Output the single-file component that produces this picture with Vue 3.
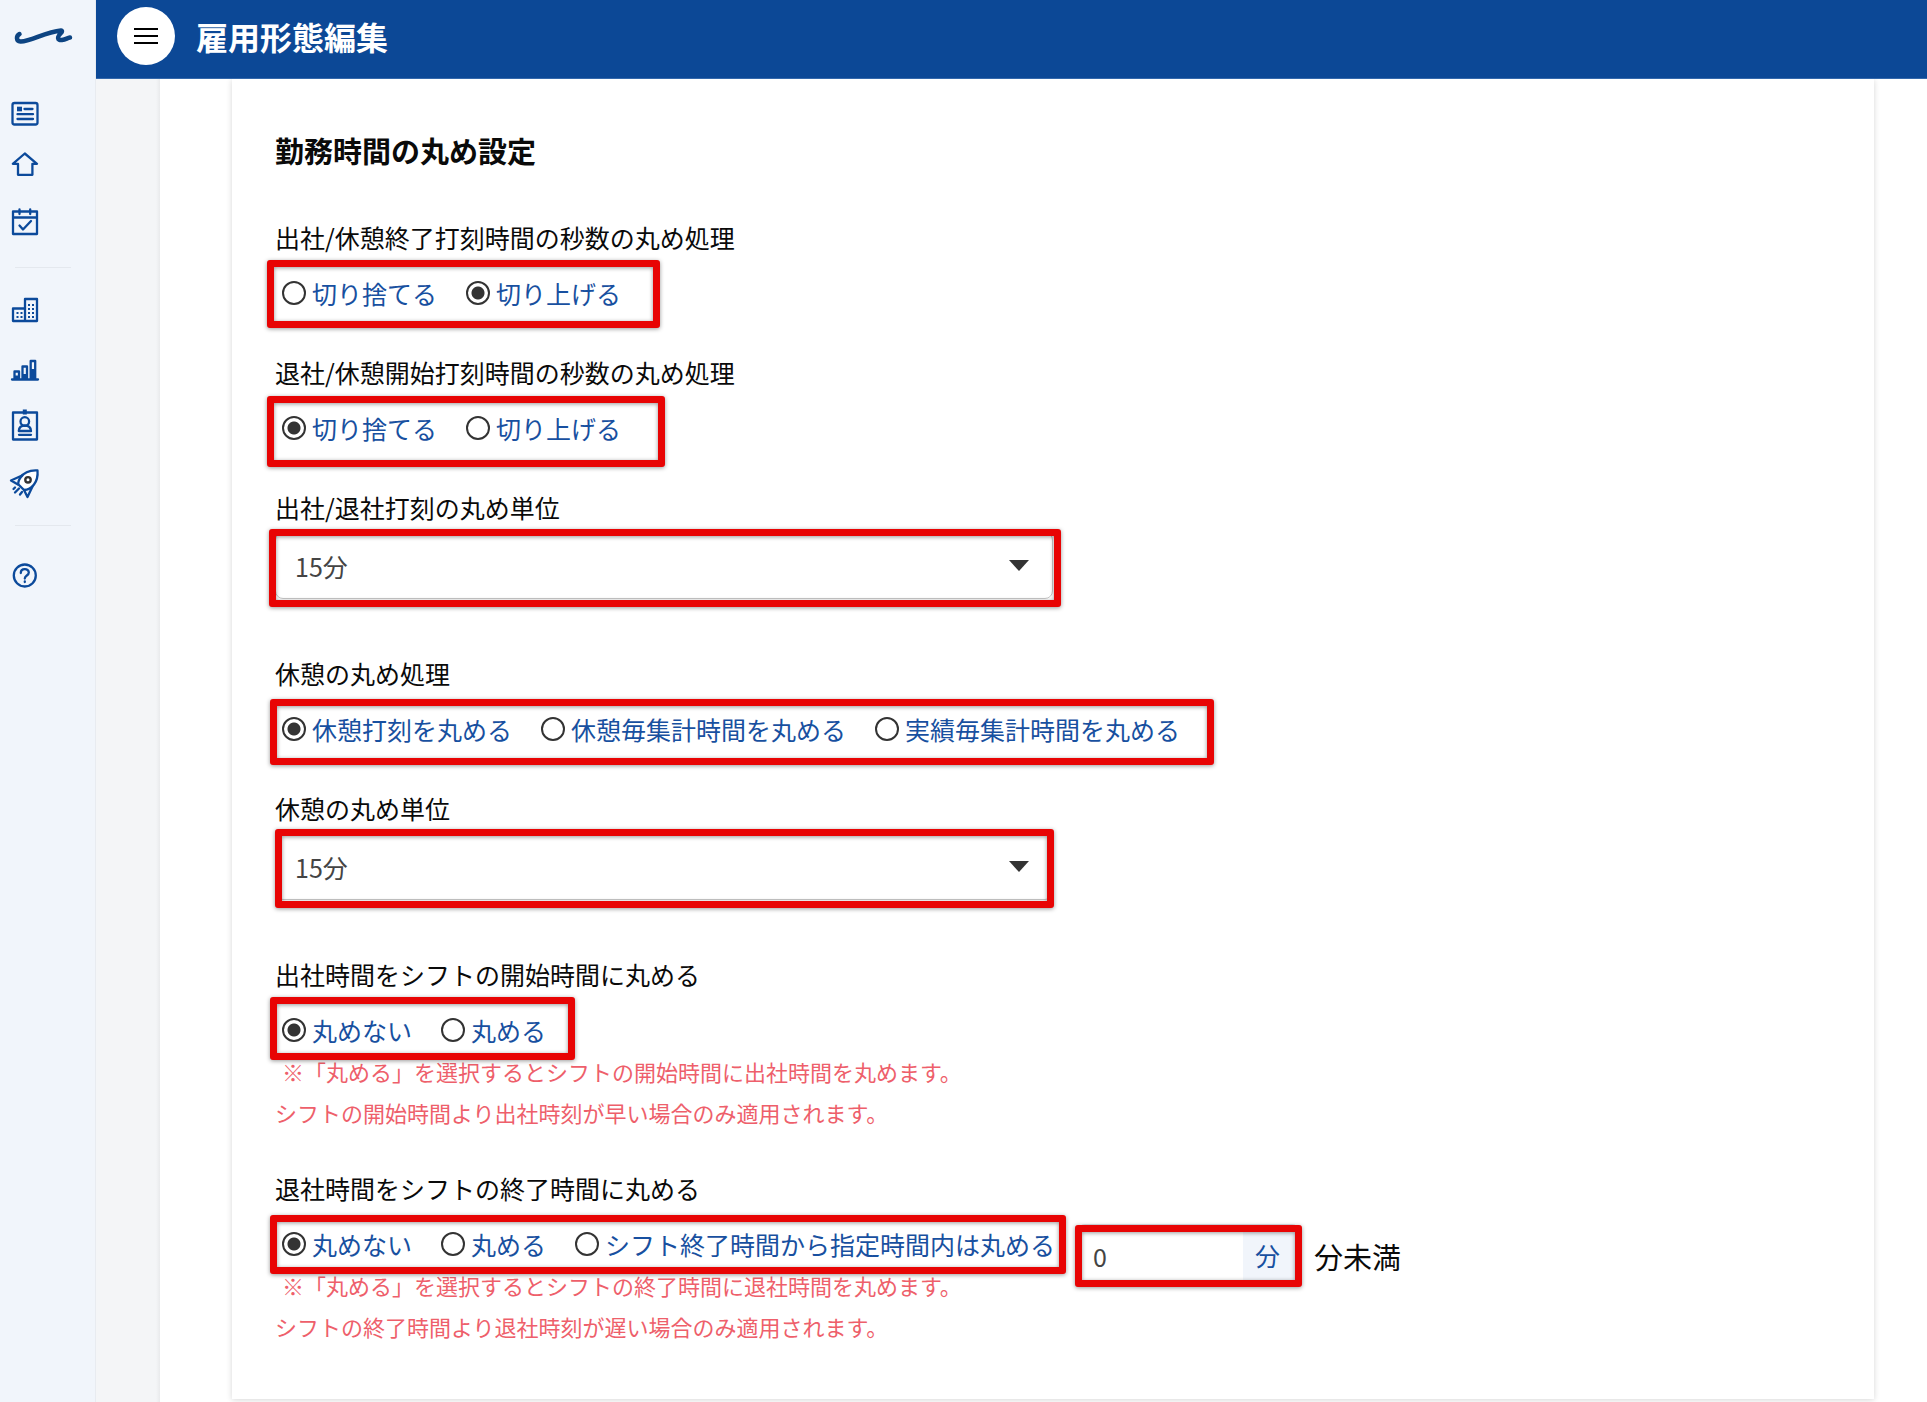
<script setup>
import { reactive } from 'vue'

const units = ['1分', '5分', '10分', '15分', '30分']

// `mark` is the highlight rectangle drawn over the control: offset and size in px
const fields = reactive([
  {
    id: 'in-seconds', kind: 'radio', label: '出社/休憩終了打刻時間の秒数の丸め処理',
    options: ['切り捨てる', '切り上げる'], value: '切り上げる',
    mark: { left: -8, top: -15, width: 393, height: 68 }
  },
  {
    id: 'out-seconds', kind: 'radio', label: '退社/休憩開始打刻時間の秒数の丸め処理',
    options: ['切り捨てる', '切り上げる'], value: '切り捨てる',
    mark: { left: -8, top: -14, width: 398, height: 71 }
  },
  {
    id: 'punch-unit', kind: 'select', label: '出社/退社打刻の丸め単位', value: '15分',
    mark: { left: -6, top: -3, width: 792, height: 78 }
  },
  {
    id: 'break-mode', kind: 'radio', label: '休憩の丸め処理',
    options: ['休憩打刻を丸める', '休憩毎集計時間を丸める', '実績毎集計時間を丸める'], value: '休憩打刻を丸める',
    mark: { left: -5, top: -12, width: 944, height: 66 }
  },
  {
    id: 'break-unit', kind: 'select', label: '休憩の丸め単位', value: '15分',
    mark: { left: 0, top: -4, width: 779, height: 79 }
  },
  {
    id: 'shift-start', kind: 'radio', label: '出社時間をシフトの開始時間に丸める',
    options: ['丸めない', '丸める'], value: '丸めない',
    mark: { left: -5, top: -15, width: 305, height: 63 },
    notes: ['※「丸める」を選択するとシフトの開始時間に出社時間を丸めます。', 'シフトの開始時間より出社時刻が早い場合のみ適用されます。']
  },
  {
    id: 'shift-end', kind: 'radio', label: '退社時間をシフトの終了時間に丸める',
    options: ['丸めない', '丸める', 'シフト終了時間から指定時間内は丸める'], value: '丸めない',
    mark: { left: -5, top: -11, width: 796, height: 59 },
    notes: ['※「丸める」を選択するとシフトの終了時間に退社時間を丸めます。', 'シフトの終了時間より退社時刻が遅い場合のみ適用されます。'],
    limit: { value: '0', mark: { left: -3, top: 0, width: 227, height: 62 } }
  }
])

const box = (m) => ({ left: m.left + 'px', top: m.top + 'px', width: m.width + 'px', height: m.height + 'px' })
</script>

<template>
  <div class="shell">
    <aside class="sidebar">
      <a class="logo" href="#" aria-label="トップ">
        <svg width="60" height="20" viewBox="0 0 60 20" fill="none" stroke="#0d4482" stroke-width="4.500" stroke-linecap="round" stroke-linejoin="round">
          <path d="M6.500 8C3 10 3 15 7.500 15.500C17 16 32 6 48 4.500C49.500 4.500 49 6 48 7C44 11 44 14.500 49 14C53 13.500 54 12 57 11.500" />
        </svg>
      </a>
      <nav>
        <ul>
          <li><a href="#" aria-label="お知らせ"><svg viewBox="0 0 40 40">
            <rect x="7.500" y="12" width="25" height="21.500" rx="2" />
            <path d="M19.500 18h8M12.500 23.200h15.500M12.500 28h15.500" />
            <rect class="solid" x="12" y="15.700" width="5" height="4.600" />
          </svg></a></li>
          <li><a href="#" aria-label="ホーム"><svg viewBox="0 0 40 40">
            <path d="M19.800 6.500L32 16.800H27.400V27.800H13V16.800H7.800Z" />
          </svg></a></li>
          <li><a href="#" aria-label="勤怠"><svg viewBox="0 0 40 40">
            <path d="M8 8.500H32V31H8ZM8 14.500H32M14.500 6.500v4.500M25.200 6.500v4.500M14.500 22.500l3.500 4 8-8.500" />
          </svg></a></li>
        </ul>
        <hr />
        <ul>
          <li><a href="#" aria-label="会社"><svg viewBox="0 0 40 40">
            <path d="M20 6H32V28H8V15.500H20ZM20 15V28" />
            <path class="dots" d="M12.500 19v6M16.500 19v6M24 11v14M28 11v14" />
          </svg></a></li>
          <li><a href="#" aria-label="集計"><svg viewBox="0 0 40 40">
            <path d="M7 30.500H33M9.500 30V22.500H14V30M17.500 30V17.500H22V30M25.700 30V12H30.200V30" />
            <path class="solid" d="M9 26.500h6v4H9ZM17 25h6v5.500h-6ZM25 20h6v10.500h-6Z" />
          </svg></a></li>
          <li><a href="#" aria-label="従業員"><svg viewBox="0 0 40 40">
            <path d="M8 7.500H32V34.500H8ZM14 29.800H26M13.800 26C14 22.500 16 20.500 19.800 20.500S25.800 22.500 26 26Z" />
            <circle cx="19.800" cy="16.500" r="4.300" />
            <rect class="solid" x="17.800" y="4.500" width="4" height="5" />
          </svg></a></li>
          <li><a href="#" aria-label="申請"><svg viewBox="0 0 40 40">
            <path fill="#fff" d="M32.500 9.500C25 9 19 11.500 15.500 16.500C13.500 19.500 13 22 13.500 23.500L19 29C22 29 26 27.500 29 23.500C32 19.500 33 15 32.500 9.500Z" />
            <path d="M17 14.500L6 19.500L13 23.500M19 29L22.500 36L27.500 25.500M10 26.500l-1.500 1.500M14 27.500l-4 4M17 31l-2 2.500" />
            <circle cx="23" cy="18.800" r="2.700" stroke="#333" stroke-width="2.400" />
          </svg></a></li>
        </ul>
        <hr />
        <ul>
          <li><a href="#" aria-label="ヘルプ"><svg viewBox="0 0 40 40">
            <circle cx="19.800" cy="24.500" r="11" />
            <path d="M15.800 22C15.800 17 23.800 17 23.800 21.500C23.800 24.500 19.800 24.500 19.800 27.500M19.800 30.500v.5" />
          </svg></a></li>
        </ul>
      </nav>
    </aside>

    <div class="page">
      <header>
        <button type="button" class="menu" aria-label="メニュー"><span></span><span></span><span></span></button>
        <h1>雇用形態編集</h1>
      </header>

      <main>
        <form class="card" @submit.prevent>
          <h2>勤務時間の丸め設定</h2>

          <section v-for="f in fields" :key="f.id" class="field">
            <template v-if="f.kind === 'select'">
              <label class="caption" :for="f.id">{{ f.label }}</label>
              <div class="select">
                <select :id="f.id" v-model="f.value">
                  <option v-for="u in units" :key="u">{{ u }}</option>
                </select>
                <span class="mark" :style="box(f.mark)"></span>
              </div>
            </template>

            <template v-else>
              <p class="caption" :id="f.id">{{ f.label }}</p>
              <div class="body">
                <div class="choice">
                  <div class="radios" role="radiogroup" :aria-labelledby="f.id">
                    <label v-for="o in f.options" :key="o">
                      <input v-model="f.value" type="radio" :name="f.id" :value="o" />{{ o }}
                    </label>
                    <span class="mark" :style="box(f.mark)"></span>
                  </div>
                  <div v-if="f.notes" class="notes">
                    <p v-for="n in f.notes" :key="n">{{ n }}</p>
                  </div>
                </div>
                <div v-if="f.limit" class="limit">
                  <div class="amount">
                    <input id="limit" v-model="f.limit.value" type="text" />
                    <label for="limit">分</label>
                    <span class="mark" :style="box(f.limit.mark)"></span>
                  </div>
                  <span class="suffix">分未満</span>
                </div>
              </div>
            </template>
          </section>
        </form>
      </main>
    </div>
  </div>
</template>

<style>
body {
  background: #fff;
}
</style>

<style scoped>
* {
  box-sizing: border-box;
}

.shell {
  display: flex;
  min-height: 100vh;
  font-family: "Noto Sans CJK JP", sans-serif;
  font-size: 25px;
  line-height: 36px;
  color: #0a0a0a;
}

h1, h2, p, ul {
  margin: 0;
  padding: 0;
}

.sidebar {
  flex: 0 0 96px;
  background: #f1f5fb;
  border-right: 1px solid #e8ebf0;
}

.logo {
  display: block;
  height: 91px;
  padding: 26px 0 0 13px;
}

.logo svg {
  display: block;
}

ul {
  display: flex;
  flex-direction: column;
  gap: 16px;
  padding-left: 5px;
  list-style: none;
}

li a, li svg {
  display: block;
  width: 40px;
  height: 40px;
}

li svg {
  fill: none;
  stroke: #0c4a9b;
  stroke-width: 2.3;
  stroke-linecap: round;
  stroke-linejoin: round;
}

li svg .solid {
  fill: #0c4a9b;
  stroke: none;
}

li svg .dots {
  stroke-width: 2;
  stroke-linecap: butt;
  stroke-dasharray: 2 2;
}

hr {
  height: 1px;
  margin: 24px 24px 25px 15px;
  border: 0;
  background: #e4e8ee;
}

.page {
  flex: 1;
  min-width: 0;
  display: flex;
  flex-direction: column;
}

header {
  position: relative;
  z-index: 1;
  display: flex;
  align-items: center;
  gap: 21px;
  height: 79px;
  padding: 0 21px 6px;
  background: #0c4896;
  border-bottom: 1px solid #3468ab;
}

.menu {
  display: flex;
  flex-direction: column;
  align-items: center;
  justify-content: center;
  gap: 5px;
  width: 58px;
  height: 58px;
  padding: 0;
  border: 0;
  border-radius: 50%;
  background: #fff;
}

.menu span {
  width: 24px;
  height: 2px;
  background: #000;
}

h1 {
  font-size: 32px;
  font-weight: 700;
  line-height: 48px;
  color: #fff;
}

main {
  flex: 1;
  padding-left: 64px;
  background: linear-gradient(90deg, #f4f5f7 60px, #e9eaec 64px, #fff 64px);
}

.card {
  margin: 0 53px 0 72px;
  padding: 50px 43px 52px;
  background: #fff;
  box-shadow: 0 1px 6px rgba(0, 0, 0, 0.16);
}

h2 {
  margin-bottom: 48px;
  font-size: 29px;
  font-weight: 700;
  line-height: 42px;
}

.field {
  margin-bottom: 43px;
}

.field:has(.select) {
  margin-bottom: 56px;
}

.field:has(.notes) {
  margin-bottom: 37px;
}

.field:last-child {
  margin-bottom: 0;
}

.caption {
  display: block;
}

.select {
  position: relative;
  width: 778px;
  margin-top: 7px;
}

.select::after {
  content: "";
  position: absolute;
  top: 28px;
  right: 24px;
  border: solid transparent;
  border-width: 11px 10px 0;
  border-top-color: #333;
  pointer-events: none;
}

select {
  display: block;
  width: 100%;
  height: 67px;
  padding: 0 48px 0 19px;
  appearance: none;
  border: 1px solid #c8c8c8;
  border-radius: 8px;
  background: #fff;
  font: inherit;
  color: #444;
}

.body {
  display: flex;
  align-items: flex-start;
  gap: 22px;
}

.choice {
  flex: 0 0 778px;
  padding-top: 20px;
}

.radios {
  position: relative;
  display: flex;
  gap: 29px;
  padding-left: 7px;
  white-space: nowrap;
}

.radios label {
  display: flex;
  align-items: center;
  gap: 6px;
  color: #1850a0;
}

.radios input {
  width: 24px;
  height: 24px;
  margin: 0;
  appearance: none;
  border: 2px solid #333;
  border-radius: 50%;
  background: #fff;
}

.radios input:checked {
  background: radial-gradient(circle, #333 6px, #fff 7px);
}

.notes {
  margin-top: 3px;
  font-size: 22px;
  line-height: 41px;
  color: #ee5f6b;
  white-space: nowrap;
}

.notes p:first-child {
  padding-left: 7px;
}

.limit {
  display: flex;
  align-items: center;
  gap: 14px;
  padding-top: 18px;
}

.amount {
  position: relative;
  display: flex;
  width: 223px;
  height: 63px;
  border: 1px solid #dde1e6;
  border-radius: 8px;
}

.amount input {
  flex: 1;
  min-width: 0;
  padding: 0 15px;
  border: 0;
  border-radius: 8px;
  background: #fff;
  font: inherit;
  color: #444;
}

.amount label {
  flex: 0 0 56px;
  padding-left: 12px;
  border-radius: 0 8px 8px 0;
  background: #f1f5fb;
  color: #1850a0;
  line-height: 61px;
}

.suffix {
  font-size: 29px;
}

.mark {
  position: absolute;
  z-index: 1;
  border: 7px solid #e80404;
  border-radius: 3px;
  filter: drop-shadow(0 1px 2px rgba(0, 0, 0, 0.4));
  pointer-events: none;
}
</style>
